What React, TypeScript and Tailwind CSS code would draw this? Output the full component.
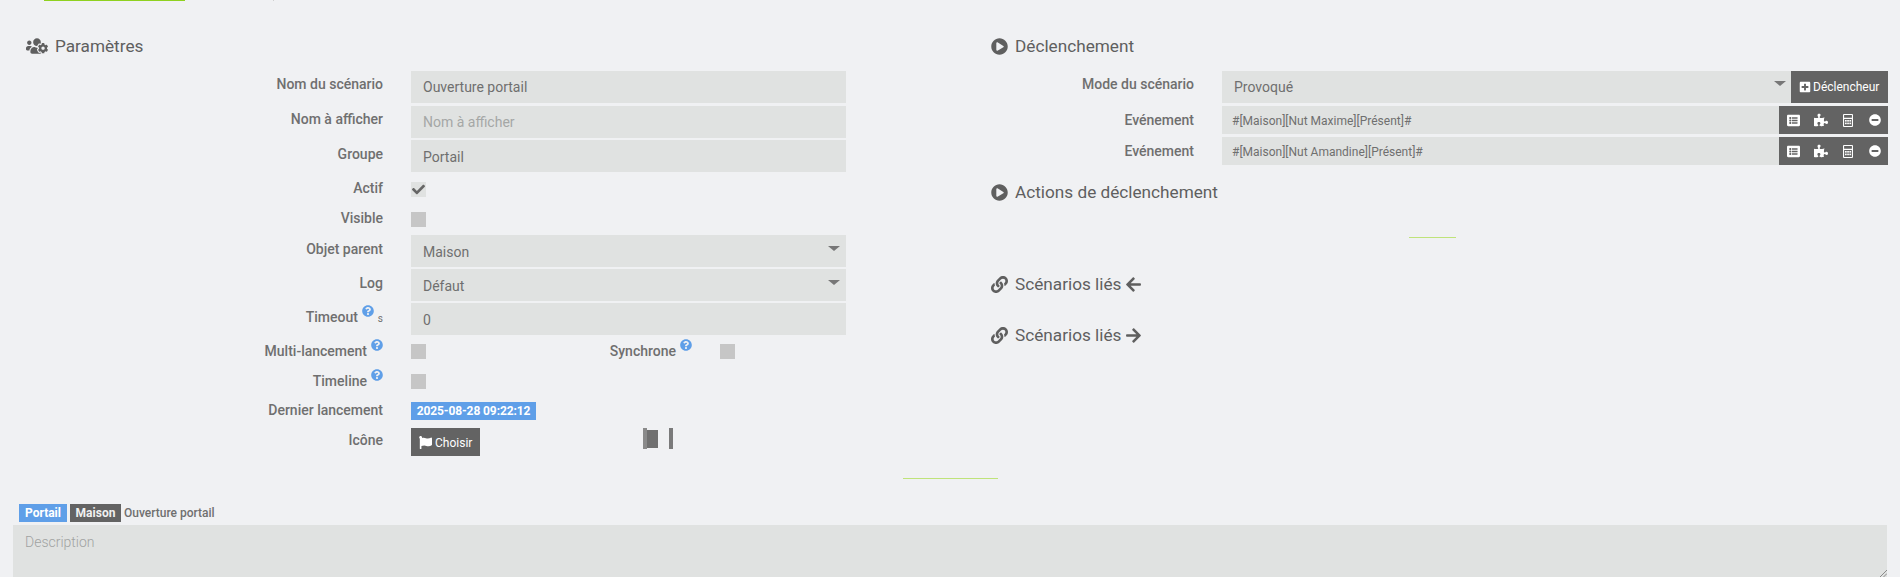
import React from "react";
import { FaUsersCog, FaPlayCircle, FaLink, FaArrowLeft, FaArrowRight, FaCheck, FaFlag, FaPlusSquare, FaListAlt, FaPuzzlePiece, FaMinusCircle, FaQuestionCircle } from "react-icons/fa";

function Help() {
  return <FaQuestionCircle className="inline-block text-[12px] text-[#5f9fe8] align-[5px] ml-[4px]" />;
}

function Label({ children, className = "" }: { children: React.ReactNode; className?: string }) {
  return <div className={"text-right font-medium text-[14px] leading-[20px] text-[#6f6f6f] " + className}>{children}</div>;
}

function Field({ value, placeholder, select, low }: { value?: string; placeholder?: boolean; select?: boolean; low?: boolean }) {
  return (
    <div className={"relative h-[32px] w-[435px] bg-[#e0e2e1] pl-[12px] text-[14px] " + (low ? "leading-[34px] " : "leading-[32px] ") + (placeholder ? "text-[#a5a7a6]" : "text-[#6f6f6f]")}>
      {value}
      {select && <span className="absolute right-[6px] top-[11px] border-x-[6px] border-t-[5px] border-x-transparent border-t-[#777]" />}
    </div>
  );
}

function Box({ checked }: { checked?: boolean }) {
  return (
    <div className={"flex h-[15px] w-[15px] items-center justify-center " + (checked ? "bg-[#e0e2e1]" : "bg-[#c6c6c6]")}>
      {checked && <FaCheck className="text-[13px] text-[#666]" />}
    </div>
  );
}

function Row({ label, children, className, labelClass }: { label: React.ReactNode; children: React.ReactNode; className: string; labelClass: string }) {
  return (
    <div className={"flex items-start " + className}>
      <div className="w-[383px] shrink-0"><Label className={labelClass}>{label}</Label></div>
      <div className="ml-[28px]">{children}</div>
    </div>
  );
}

function Title({ icon, children, className = "" }: { icon: React.ReactNode; children: React.ReactNode; className?: string }) {
  return (
    <div className={"flex items-center text-[17.2px] leading-[24px] text-[#5f5f5f] " + className}>
      {icon}
      {children}
    </div>
  );
}

function Calc() {
  return (
    <svg width="10" height="13" viewBox="0 0 10 13" className="ml-[15px]" fill="currentColor">
      <path fillRule="evenodd" d="M1 0h8a1 1 0 0 1 1 1v11a1 1 0 0 1-1 1H1a1 1 0 0 1-1-1V1a1 1 0 0 1 1-1zm.1 1.1v2.7h7.8V1.1zm0 3.9v6.9h7.8V5z" />
      <rect x="2" y="6" width="1.7" height="1.6" />
      <rect x="4.2" y="6" width="1.7" height="1.6" />
      <rect x="6.4" y="6" width="1.7" height="1.6" />
      <rect x="2" y="8.6" width="1.7" height="1.6" />
      <rect x="4.2" y="8.6" width="1.7" height="1.6" />
      <rect x="6.4" y="8.6" width="1.7" height="1.6" />
    </svg>
  );
}

function EventRow({ value }: { value: string }) {
  return (
    <div className="flex items-start h-[28px]">
      <div className="w-[204px] shrink-0"><Label className="mt-[4px]">Evénement</Label></div>
      <div className="ml-[28px] h-[28px] w-[557px] bg-[#e0e2e1] pl-[10px] text-[12px] leading-[30px] text-[#6f6f6f]">{value}</div>
      <div className="flex h-[28px] w-[109px] items-center bg-[#636363] pl-[8px] text-white">
        <FaListAlt className="text-[13px]" />
        <FaPuzzlePiece className="ml-[14px] text-[14px]" />
        <Calc />
        <FaMinusCircle className="ml-[16px] text-[12px]" />
      </div>
    </div>
  );
}

export default function App() {
  return (
    <div className="h-[577px] w-[1900px] overflow-hidden bg-[#f0f1f3] font-['Roboto',sans-serif]">
      <div className="flex h-[1px]">
        <div className="ml-[44px] h-[1px] w-[141px] bg-[#8fd11f]" />
        <div className="ml-[88px] h-[1px] w-[1px] bg-[#d0d0d0]" />
      </div>
      <div className="flex h-[477px]">
        <div className="w-[990px] shrink-0">
          <Title icon={<FaUsersCog className="mr-[7px] ml-[26px] text-[22px]" />} className="mt-[33px] mb-[13px]">Paramètres</Title>
          <Row label="Nom du scénario" labelClass="mt-[3px]" className="h-[35px]"><Field value="Ouverture portail" /></Row>
          <Row label="Nom à afficher" labelClass="mt-[3px]" className="h-[34px]"><Field value="Nom à afficher" placeholder /></Row>
          <Row label="Groupe" labelClass="mt-[4px]" className="h-[42px]"><Field value="Portail" low /></Row>
          <Row label="Actif" labelClass="-mt-[4px]" className="h-[30px]"><Box checked /></Row>
          <Row label="Visible" labelClass="-mt-[4px]" className="h-[23px]"><Box /></Row>
          <Row label="Objet parent" labelClass="mt-[4px]" className="h-[34px]"><Field value="Maison" select low /></Row>
          <Row label="Log" labelClass="mt-[4px]" className="h-[34px]"><Field value="Défaut" select low /></Row>
          <Row label={<>Timeout<Help /><span className="ml-[4px] text-[10px] font-normal">s</span></>} labelClass="mt-[2px]" className="h-[41px]"><Field value="0" low /></Row>
          <Row label={<>Multi-lancement<Help /></>} labelClass="-mt-[5px]" className="h-[30px]">
            <div className="flex w-[435px] items-start">
              <Box />
              <div className="w-[266px]"><Label className="-mt-[5px] whitespace-nowrap">Synchrone<Help /></Label></div>
              <div className="ml-[28px]"><Box /></div>
            </div>
          </Row>
          <Row label={<>Timeline<Help /></>} labelClass="-mt-[5px]" className="h-[28px]"><Box /></Row>
          <Row label="Dernier lancement" labelClass="-mt-[2px]" className="h-[26px]">
            <div className="h-[18px] w-[125px] bg-[#5f9fe8] text-center text-[12px] font-bold leading-[18px] tracking-[-0.1px] text-white">2025-08-28 09:22:12</div>
          </Row>
          <Row label="Icône" labelClass="mt-[2px]" className="h-[28px]">
            <div className="flex w-[262px] items-start justify-between">
              <div className="flex h-[28px] w-[69px] items-center bg-[#636363] pl-[8px] pt-[1px] text-[12px] text-white"><FaFlag className="mr-[3px] text-[13px]" />Choisir</div>
              <div className="flex">
                <div className="flex h-[21px] items-center">
                  <div className="h-[21px] w-[4px] bg-[#8a8a8a]" />
                  <div className="h-[18px] w-[11px] bg-[#707070]" />
                </div>
                <div className="ml-[11px] h-[21px] w-[4px] bg-[#7a7a7a]" />
              </div>
            </div>
          </Row>
        </div>
        <div className="flex-1">
          <Title icon={<FaPlayCircle className="ml-[1px] mr-[7px] text-[17px]" />} className="mt-[33px] mb-[13px]">Déclenchement</Title>
          <div className="flex h-[35px] items-start">
            <div className="w-[204px] shrink-0"><Label className="mt-[3px]">Mode du scénario</Label></div>
            <div className="relative ml-[28px] h-[32px] w-[569px] bg-[#e0e2e1] pl-[12px] text-[14px] leading-[32px] text-[#6f6f6f]">
              Provoqué
              <span className="absolute right-[5px] top-[10px] border-x-[6px] border-t-[5px] border-x-transparent border-t-[#777]" />
            </div>
            <div className="flex h-[32px] w-[97px] items-center bg-[#636363] pl-[8px] text-[12px] text-white"><FaPlusSquare className="mr-[2px] text-[12px]" />Déclencheur</div>
          </div>
          <div className="flex flex-col gap-[3px]">
            <EventRow value="#[Maison][Nut Maxime][Présent]#" />
            <EventRow value="#[Maison][Nut Amandine][Présent]#" />
          </div>
          <Title icon={<FaPlayCircle className="ml-[1px] mr-[7px] text-[17px]" />} className="mt-[15px]">Actions de déclenchement</Title>
          <div className="ml-[419px] mt-[33px] h-[1px] w-[47px] bg-[#bfe37a]" />
          <Title icon={<FaLink className="ml-[1px] mr-[7px] text-[17px]" />} className="mt-[34px]">Scénarios liés<FaArrowLeft className="ml-[4px] text-[17px]" /></Title>
          <Title icon={<FaLink className="ml-[1px] mr-[7px] text-[17px]" />} className="mt-[27px]">Scénarios liés<FaArrowRight className="ml-[4px] text-[17px]" /></Title>
        </div>
      </div>
      <div className="ml-[903px] h-[1px] w-[95px] bg-[#bfe37a]" />
      <div className="ml-[19px] mt-[25px] flex h-[18px] items-center text-[12px] font-bold text-white">
        <span className="flex h-[18px] w-[48px] items-center justify-center bg-[#5f9fe8]">Portail</span>
        <span className="ml-[3px] flex h-[18px] w-[51px] items-center justify-center bg-[#636363] text-[#f0f0f0]">Maison</span>
        <span className="ml-[3px] font-medium text-[#6f6f6f]">Ouverture portail</span>
      </div>
      <div className="relative ml-[13px] mt-[3px] h-[52px] w-[1874px] bg-[#e0e2e1] pl-[12px] pt-[7px] text-[14px] font-light leading-[20px] text-[#a0a2a1]">
        Description
        <svg width="7" height="7" viewBox="0 0 7 7" className="absolute bottom-0 right-0" stroke="#8a8a8a" strokeWidth="1" fill="none">
          <path d="M7 0 L0 7 M7 3.5 L3.5 7" />
        </svg>
      </div>
    </div>
  );
}
